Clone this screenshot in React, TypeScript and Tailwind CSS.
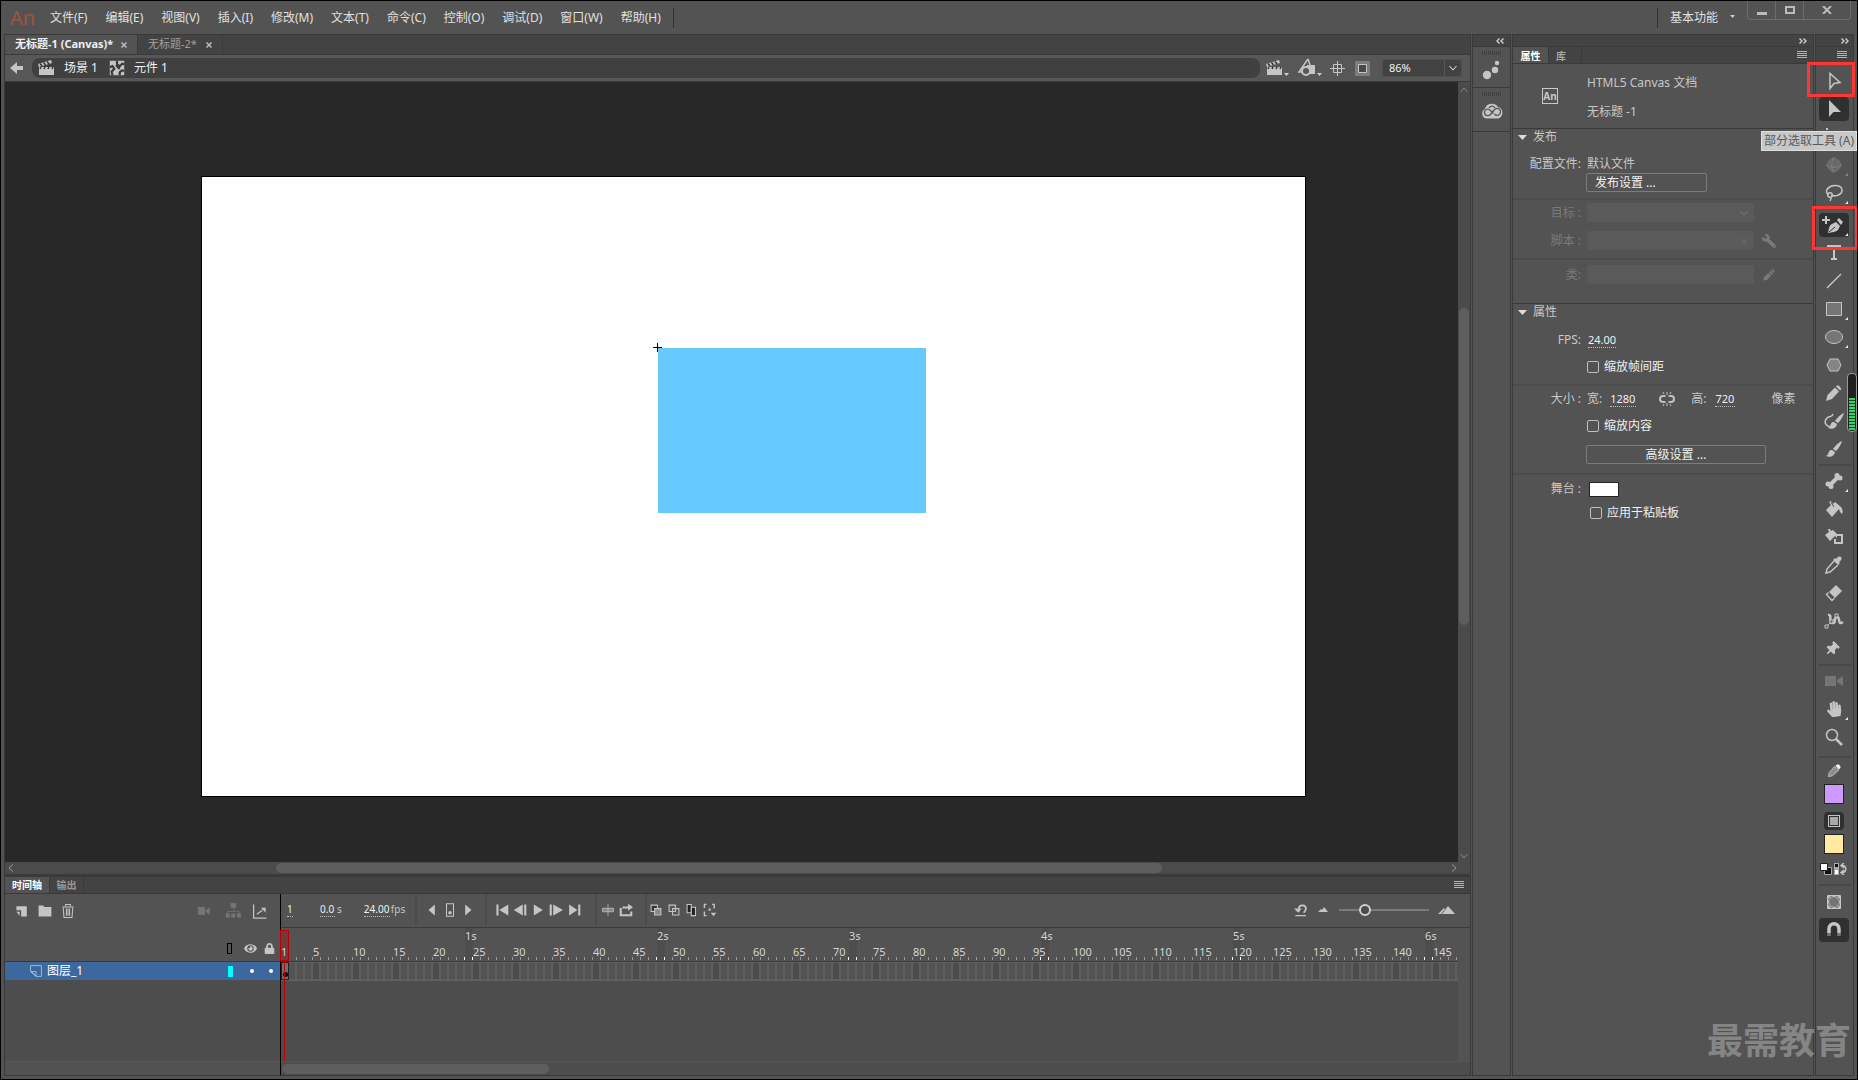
import type { ReactNode } from "react";
import { FaEye, FaHandPaper, FaLock, FaThumbtack, FaWrench } from "react-icons/fa";

const menus = [
  "文件(F)",
  "编辑(E)",
  "视图(V)",
  "插入(I)",
  "修改(M)",
  "文本(T)",
  "命令(C)",
  "控制(O)",
  "调试(D)",
  "窗口(W)",
  "帮助(H)",
];

const frames = Array.from({ length: 148 }, (_, i) => i + 1);

type IconProps = { children: ReactNode; size?: string };

function Icon({ children, size = "size-5" }: IconProps) {
  return (
    <svg
      viewBox="0 0 20 20"
      className={`${size} shrink-0 overflow-visible`}
      fill="currentColor"
      aria-hidden="true"
    >
      {children}
    </svg>
  );
}

function Chevron({ className = "" }: { className?: string }) {
  return (
    <svg
      viewBox="0 0 8 8"
      className={`size-2 shrink-0 ${className}`}
      fill="none"
      stroke="currentColor"
      aria-hidden="true"
    >
      <path d="M.5 2 4 6l3.500-4" />
    </svg>
  );
}

function Caret() {
  return (
    <svg viewBox="0 0 5 3" className="mb-0.5 h-[3px] w-[5px]" aria-hidden="true">
      <path d="M0 0h5L2.500 3z" fill="#ccc" />
    </svg>
  );
}

function MenuLines() {
  return (
    <button aria-label="面板菜单" className="text-[#b5b5b5]">
      <svg viewBox="0 0 10 8" className="h-2 w-2.5" stroke="currentColor" shapeRendering="crispEdges">
        <path d="M0 .5h10M0 2.500h10M0 4.500h10M0 6.500h10" />
      </svg>
    </button>
  );
}

function DoubleArrow({ left = false }: { left?: boolean }) {
  return (
    <svg
      viewBox="0 0 8 6"
      className={left ? "h-1.5 w-2 rotate-180" : "h-1.5 w-2"}
      fill="none"
      stroke="#c5c5c5"
      strokeWidth="1.500"
      aria-hidden="true"
    >
      <path d="m.5.5 2.500 2.500L.5 5.500M4.500.5 7 3 4.500 5.500" />
    </svg>
  );
}

function Clapper() {
  return (
    <Icon>
      <path d="M3 9h15v8H3z" />
      <path d="m2 6 13-4 1 3L3 9z" fill="#c5c5c5" />
      <path d="m4 5.500 2 2.500M7.500 4.500l2 2.500M11 3.500 13 6M5 9l-1 2M9 9l-1 2M13 9l-1 2M17 9l-1 2" stroke="#333" strokeWidth="1.500" />
    </Icon>
  );
}

type ToolProps = {
  name: string;
  children: ReactNode;
  active?: boolean;
  corner?: boolean;
  dim?: boolean;
  mark?: ReactNode;
};

function Tool({ name, children, active, corner, dim, mark }: ToolProps) {
  return (
    <div className="relative flex h-7 items-center justify-center pr-0.5">
      <button
        aria-label={name}
        disabled={dim}
        className={`relative flex h-6 w-[30px] items-center justify-center rounded-sm ${
          active ? "bg-[#303030]" : ""
        } ${dim ? "text-[#757575]" : "text-[#c5c5c5]"}`}
      >
        {children}
        {corner && (
          <svg viewBox="0 0 3 3" className="absolute right-px bottom-px size-[3px]">
            <path d="M3 0v3H0z" fill={dim ? "#888" : "#e8e8e8"} />
          </svg>
        )}
      </button>
      {mark}
    </div>
  );
}

function ToolDivider() {
  return <div className="mx-0.5 my-px h-0.5 bg-[#494949]" />;
}

function Brush() {
  return (
    <>
      <path d="M18 2c-3 1-7 5-9 8l3 2c2-2 5-6 6-10z" />
      <path d="M8 11c-3 0-3 2-4 4-.5 1-1 1.500-2 2 3 1.500 8 1 9-4z" />
    </>
  );
}

function ToolsPanel() {
  return (
    <aside className="relative flex w-[39px] flex-col border border-[#3a3a3a]">
      <div className="flex h-[11px] items-center justify-end bg-[#434343] pr-1">
        <DoubleArrow />
      </div>
      <div className="mb-[3px] flex h-[18px] items-center justify-end border-y border-[#3a3a3a] bg-[#434343] pr-1.5">
        <MenuLines />
      </div>

      <Tool
        name="选择工具"
        mark={<span className="absolute -top-[5px] -left-[9px] z-10 h-[35px] w-12 border-3 border-[#ff3535]" />}
      >
        <Icon>
          <path d="M6 2.500v15l4-5 6-1z" fill="none" stroke="currentColor" strokeWidth="1.500" />
        </Icon>
      </Tool>
      <Tool name="部分选取工具" active>
        <Icon>
          <path d="M5 1v17l4.500-5H17z" />
        </Icon>
      </Tool>
      <Tool name="任意变形工具" corner>
        <Icon>
          <path d="M2 1h2v2H2zM2 6h14v10H2z" />
        </Icon>
      </Tool>
      <Tool name="3D 旋转工具" corner dim>
        <Icon>
          <circle cx="10" cy="10" r="6.500" fill="#686868" stroke="currentColor" />
          <path d="M10 2c-3 4-3 12 0 16M2 10c4 3 12 3 16 0" fill="none" stroke="#808080" />
        </Icon>
      </Tool>
      <Tool name="套索工具" corner>
        <Icon>
          <g fill="none" stroke="currentColor" strokeWidth="1.500">
            <path d="M4.500 12C-1 7 6 2.500 11 2.500c9 0 9 8 2 10-2 .5-4 .5-6 0" />
            <circle cx="6" cy="12" r="2.300" />
            <path d="M6.500 14c2 2-1 2 0 4" />
          </g>
        </Icon>
      </Tool>
      <div className="h-1" />
      <Tool
        name="添加锚点工具"
        active
        corner
        mark={<span className="absolute -top-[5px] -left-1 z-10 h-11 w-[46px] border-3 border-[#ff3535]" />}
      >
        <Icon>
          <path d="M1 1h2v3h3v2H3v3H1V6h-3V4h3z" />
          <path d="M4 18c1-4 1-8 4-9l4-2 4 4-2 4c-2 2-6 2-10 3z" />
          <path d="m13 5 2-2 4 4-2 3z" />
          <path d="m5 17 6-5" stroke="#303030" />
        </Icon>
      </Tool>
      <Tool name="文本工具">
        <Icon>
          <path d="M3 2h14v2h-6v11h2v2H7v-2h2V4H3z" />
        </Icon>
      </Tool>
      <Tool name="线条工具">
        <Icon>
          <path d="M3 17 17 3" stroke="currentColor" strokeWidth="1.500" />
        </Icon>
      </Tool>
      <Tool name="矩形工具" corner>
        <Icon>
          <path d="M2.500 3.500h15v13h-15z" fill="#757575" stroke="currentColor" />
        </Icon>
      </Tool>
      <Tool name="椭圆工具" corner>
        <Icon>
          <ellipse cx="10" cy="10" rx="8.500" ry="6.500" fill="#757575" stroke="currentColor" />
        </Icon>
      </Tool>
      <Tool name="多角星形工具">
        <Icon>
          <path d="m6 4h8l3 6-3 6H6l-3-6z" fill="#858585" stroke="currentColor" />
        </Icon>
      </Tool>
      <Tool name="铅笔工具">
        <Icon>
          <path d="m2 18 1.500-6L11 4.500l4 4L8 16zM12 3.500l1-1c1-1 5 3 4 4l-1 1z" />
        </Icon>
      </Tool>
      <Tool name="画笔工具">
        <Icon>
          <g transform="translate(2 0)">
            <Brush />
          </g>
          <path d="M9 3c-1 4-3 1-6 4-4 4-1 8 3 9" fill="none" stroke="currentColor" strokeWidth="1.500" />
        </Icon>
      </Tool>
      <Tool name="刷子工具">
        <Icon>
          <Brush />
        </Icon>
      </Tool>
      <ToolDivider />
      <Tool name="骨骼工具" corner>
        <Icon>
          <path d="m6 14 8-8" stroke="currentColor" strokeWidth="4" />
          <circle cx="13" cy="4.500" r="2.500" />
          <circle cx="16" cy="7" r="2.500" />
          <circle cx="4" cy="13" r="2.500" />
          <circle cx="7" cy="15.500" r="2.500" />
        </Icon>
      </Tool>
      <Tool name="颜料桶工具">
        <Icon>
          <path d="m2 11 5-5-2-3 2-1 2 3 2-2 6 5c2 3 2 5 1 7l-2-2-1-3-7 8z" />
          <path d="m7 3 3 5" stroke="#535353" />
        </Icon>
      </Tool>
      <Tool name="墨水瓶工具">
        <Icon>
          <path d="m1 8 4-3-1-3h2l1 2 2-1 4 4v4l-2-2-5 5z" />
          <path d="M11.500 8H18v8h-7v-4" fill="none" stroke="currentColor" strokeWidth="2" />
        </Icon>
      </Tool>
      <Tool name="滴管工具">
        <Icon>
          <path d="M12 4c2-3 4-3 5-2s1 3-2 5l1 1-2 2-5-5 2-2z" />
          <path d="m10 6-7 8-1 4 4-1 8-7" fill="none" stroke="currentColor" strokeWidth="1.500" />
        </Icon>
      </Tool>
      <Tool name="橡皮擦工具">
        <Icon>
          <path d="m5 9 7-7 6 6-7 7z" />
          <path d="m4.500 9.500-2 2 5.500 6 2.500-2.500" fill="none" stroke="currentColor" strokeWidth="1.300" />
        </Icon>
      </Tool>
      <Tool name="宽度工具">
        <Icon>
          <g fill="none" stroke="currentColor">
            <path d="M4 4c5-1 0 7 4 8 5 1 1-6 5-6s0 9 6 5" strokeWidth="2.500" />
            <path d="M2 16 13 5" />
            <path d="M1 14h3v3H1zM11 3h3v3h-3zM6 9h3v3H6z" fill="#535353" />
          </g>
        </Icon>
      </Tool>
      <Tool name="图钉工具">
        <FaThumbtack className="mr-1 size-3.5 rotate-45" />
      </Tool>
      <ToolDivider />
      <Tool name="摄像头" dim>
        <Icon>
          <path d="M1 5h11v10H1zM13 9l6-4v10l-6-4z" />
        </Icon>
      </Tool>
      <Tool name="手形工具" corner>
        <FaHandPaper className="size-4 -rotate-6" />
      </Tool>
      <Tool name="缩放工具">
        <Icon>
          <circle cx="8" cy="8" r="5.500" fill="none" stroke="currentColor" strokeWidth="1.500" />
          <path d="m12 12 6 6" stroke="currentColor" strokeWidth="2.500" />
        </Icon>
      </Tool>
      <div className="pt-1 pb-[3px]">
        <ToolDivider />
      </div>

      <div className="flex flex-col items-center gap-1 pr-0.5 text-[#c5c5c5]">
        <Icon size="h-[18px] w-4">
          <path d="m3 17 1-5 7-8 5 5-8 7z" fill="#8d8d8d" stroke="#ccc" />
          <path d="m12 3 2-1c2-1 5 2 4 4l-2 2z" fill="#f5f5f5" />
        </Icon>
        <button aria-label="笔触颜色" className="size-5 border border-[#222] bg-[#cc99ff]" />
        <button aria-label="对象绘制" className="mt-1 flex h-[18px] w-5 items-center justify-center rounded-sm bg-[#303030]">
          <span className="size-3 border border-[#c5c5c5] bg-[#aaa] shadow-[inset_0_0_0_1px_#303030]" />
        </button>
        <button aria-label="填充颜色" className="size-5 border border-[#222] bg-[#ffe9a3]" />
      </div>
      <div className="flex h-[29px] items-center justify-center gap-0.5 pr-0.5">
        <button aria-label="黑白">
          <svg viewBox="0 0 12 12" className="size-3">
            <path d="M4.500 4.500h7v7h-7z" fill="#111" stroke="#aaa" />
            <path d="M.5.5h7v7h-7z" fill="#fff" stroke="#222" />
          </svg>
        </button>
        <button aria-label="交换颜色">
          <svg viewBox="0 0 13 12" className="h-3 w-[13px]">
            <path d="M0 0h5v12H0z" fill="#aaa" />
            <path d="M1 1h3v3H1z" fill="#111" />
            <path d="M1 7h3v4H1z" fill="#fff" />
            <path d="M8 2.500c5 0 5 7 0 7M10 0 7 2.500 10 5M10 7 7 9.500l3 2.500" fill="none" stroke="#c5c5c5" strokeWidth="1.500" />
          </svg>
        </button>
      </div>
      <ToolDivider />
      <div className="mt-px">
        <Tool name="平滑">
          <Icon>
            <path d="M3.500 3.500h13v13h-13z" fill="none" stroke="currentColor" />
            <circle cx="10" cy="10" r="5.500" fill="#757575" stroke="currentColor" />
            <path d="M4 4h3L4 7zM16 4h-3l3 3zM4 16h3l-3-3zM16 16h-3l3-3z" />
          </Icon>
        </Tool>
        <Tool name="贴紧至对象" active>
          <Icon>
            <path d="M5 13V9c0-7 10-7 10 0v4" fill="none" stroke="currentColor" strokeWidth="3.500" />
            <path d="M3.250 13h3.500v3h-3.500zM13.250 13h3.500v3h-3.500z" fill="#777" />
          </Icon>
        </Tool>
      </div>

      <div
        role="tooltip"
        className="absolute top-24 -right-1 z-10 h-5 border border-[#e0e0e0] bg-[#c8c8c8] px-0.5 text-xs leading-[18px] whitespace-nowrap text-[#5a5a5a]"
      >
        部分选取工具 (A)
      </div>
      <div className="absolute top-[338px] -right-1 flex h-[59px] w-2.5 flex-col justify-end rounded-sm border border-[#999] bg-[#202020] p-px">
        <div className="h-8 bg-[repeating-linear-gradient(#2fd565_0_1px,#2fd565_1px_2px,#174525_2px_3px)]" />
      </div>
    </aside>
  );
}

function Divider() {
  return <div className="h-0.5 bg-[#4b4b4b]" />;
}

function Row({ label, id, dim, children }: { label: string; id?: string; dim?: boolean; children: ReactNode }) {
  return (
    <div className={`grid h-[18px] grid-cols-[68px_1fr] items-center gap-x-1.5 ${dim ? "text-[#7a7a7a]" : ""}`}>
      {id ? (
        <label htmlFor={id} className="text-right">{label}</label>
      ) : (
        <span className="text-right">{label}</span>
      )}
      <div className="flex items-center">{children}</div>
    </div>
  );
}

function Check({ label, className = "pl-[74px]" }: { label: string; className?: string }) {
  return (
    <label className={`flex h-[18px] items-center gap-[5px] text-[#f0f0f0] ${className}`}>
      <input type="checkbox" className="size-3 appearance-none rounded-xs border border-[#c0c0c0]" />
      {label}
    </label>
  );
}

function SectionTitle({ children }: { children: ReactNode }) {
  return (
    <h2 className="flex h-4 items-center gap-1.5 pl-[5px]">
      <svg viewBox="0 0 9 5" className="h-[5px] w-[9px]" aria-hidden="true">
        <path d="M0 0h9L4.500 5z" fill="#ddd" />
      </svg>
      {children}
    </h2>
  );
}

const numberInput =
  "border-b border-dotted border-[#bbb] text-[#f0f0f0] outline-none leading-[14px] h-[15px]";

function DisabledSelect({ id }: { id: string }) {
  return (
    <div className="relative">
      <select id={id} disabled className="block h-[19px] w-[167px] appearance-none rounded-xs bg-[#5a5a5a]" />
      <Chevron className="absolute top-1.5 right-1.5 text-[#777]" />
    </div>
  );
}

function PropertiesPanel() {
  return (
    <aside className="w-[302px] border border-[#3a3a3a] text-xs leading-[18px] text-[#c8c8c8]">
      <div className="flex h-[11px] items-center justify-end bg-[#434343] pr-1.5">
        <DoubleArrow />
      </div>
      <div className="flex h-[18px] items-center border-y border-[#3a3a3a] bg-[#434343] pr-1.5 text-[10px] font-bold">
        <button className="h-4 w-9 border-r border-[#3a3a3a] bg-[#535353] text-white">属性</button>
        <button className="h-4 w-[33px] border-r border-[#3a3a3a] pr-2 text-[#a8a8a8]">库</button>
        <span className="flex-1" />
        <MenuLines />
      </div>
      <div className="flex h-[65px] border-b border-[#3a3a3a] pt-1 pl-[29px]">
        <span className="mt-5 h-4 w-4 border border-[#c8c8c8] text-center text-[10px] leading-[14px] font-bold">An</span>
        <div className="pl-[29px] leading-[29px]">
          <p>HTML5 Canvas 文档</p>
          <p>无标题 -1</p>
        </div>
      </div>

      <section className="border-b border-[#3a3a3a] pb-5">
        <SectionTitle>发布</SectionTitle>
        <div className="mt-2.5">
          <Row label="配置文件:">默认文件</Row>
          <div className="pl-[73px]">
            <button className="flex h-[19px] w-[121px] items-center rounded-xs border border-[#7c7c7c] pl-2 text-[#f0f0f0]">
              发布设置 ...
            </button>
          </div>
        </div>
        <div className="mt-1.5 mb-[3px]">
          <Divider />
        </div>
        <Row label="目标 :" id="target" dim>
          <DisabledSelect id="target" />
        </Row>
        <div className="mt-2.5 mb-[9px]">
          <Row label="脚本 :" id="script" dim>
            <DisabledSelect id="script" />
            <FaWrench className="ml-2 size-3.5 -scale-x-100" />
          </Row>
        </div>
        <Divider />
        <div className="mt-[5px]">
          <Row label="类:" id="class" dim>
            <input id="class" disabled className="h-[19px] w-[167px] rounded-xs bg-[#5a5a5a]" />
            <span className="ml-2">
              <Icon size="size-3.5">
                <path d="m2 18 1-5 6-6 4 4-6 6zM10 6l2-2 4 4-2 2zM13 3c2-3 7 1 4 4z" />
              </Icon>
            </span>
          </Row>
        </div>
      </section>

      <section>
        <SectionTitle>属性</SectionTitle>
        <div className="mt-[11px] mb-2 flex flex-col gap-[9px]">
          <Row label="FPS:" id="fps">
            <input id="fps" defaultValue="24.00" className={`ml-px w-7 text-[11px] ${numberInput}`} />
          </Row>
          <Check label="缩放帧间距" />
        </div>
        <Divider />
        <div className="mt-1 mb-[9px] flex flex-col gap-[9px]">
          <Row label="大小 :">
            <label htmlFor="width">宽:</label>
            <input id="width" defaultValue="1280" className={`ml-2 w-[26px] text-[11px] ${numberInput}`} />
            <button aria-label="链接宽高" className="ml-[23px]">
              <svg viewBox="0 0 16 14" className="h-3.5 w-4" fill="none" stroke="#c0c0c0">
                <path d="M6.500 4H4a3 3 0 0 0 0 6h2.500M9.500 4H12a3 3 0 0 1 0 6H9.500" strokeWidth="2" />
                <path d="M8 0v3M8 11v3M4 0l1 2M12 0l-1 2M4 14l1-2M12 14l-1-2" />
              </svg>
            </button>
            <label htmlFor="height" className="ml-4">高:</label>
            <input id="height" defaultValue="720" className={`ml-[9px] w-5 text-[11px] ${numberInput}`} />
            <span className="ml-9">像素</span>
          </Row>
          <Check label="缩放内容" />
          <button className="mt-px ml-[73px] h-[19px] w-[180px] rounded-xs border border-[#7c7c7c] leading-4 text-[#f0f0f0]">
            高级设置 ...
          </button>
        </div>
        <Divider />
        <div className="mt-[5px] flex flex-col gap-1.5">
          <Row label="舞台 :">
            <button aria-label="舞台颜色" className="ml-0.5 h-[15px] w-[30px] border border-[#222] bg-white" />
          </Row>
          <Check label="应用于粘贴板" className="pl-[77px]" />
        </div>
      </section>
    </aside>
  );
}

function DockStrip() {
  const grip = "mx-auto mt-1 h-1 w-5 bg-[repeating-linear-gradient(90deg,#3f3f3f_0_1px,transparent_1px_2px)]";
  return (
    <aside className="w-[39px] border border-[#3a3a3a] text-[#c5c5c5]">
      <div className="flex h-[11px] items-center justify-end bg-[#434343] pr-1.5">
        <DoubleArrow left />
      </div>
      <div className="h-[42px] border-y border-[#3a3a3a]">
        <div className={grip} />
        <button aria-label="组件" className="mx-auto mt-[5px] block">
          <Icon>
            <circle cx="5" cy="15" r="4.200" />
            <circle cx="13" cy="10" r="3.200" />
            <circle cx="15" cy="3" r="2.200" />
          </Icon>
        </button>
      </div>
      <div className="h-10 border-b border-[#3a3a3a]">
        <div className={grip} />
        <button aria-label="CC 库" className="mx-auto mt-[7px] block">
          <svg viewBox="0 0 22 16" className="h-4 w-[22px]">
            <path d="M6 15.500a5 5 0 0 1-2-9.500C5 0 14-1 17 4c6 1 6 11-1 11.500z" fill="#c5c5c5" />
            <path d="m12.500 10.500-3-3c-2-2.500-6-1.500-6 2s4 4 6 2l4-5c3-2.500 6-.5 6 2.500s-4 4.500-6 2M8 5c2-3 5-2 6 0" fill="none" stroke="#555" strokeWidth="1.300" />
          </svg>
        </button>
      </div>
    </aside>
  );
}

function EditBar() {
  return (
    <div className="flex h-[27px] items-center border-b border-[#3a3a3a] bg-[#575757] pr-2 pl-[5px] text-xs text-[#c5c5c5]">
      <button aria-label="返回">
        <svg viewBox="0 0 14 12" className="h-3 w-3.5" fill="currentColor">
          <path d="M0 6 7 0v4h6v4H7v4z" />
        </svg>
      </button>
      <nav className="ml-2 flex h-5 flex-1 items-center rounded-lg bg-[#404040] pl-1 text-[#f0f0f0]">
        <span className="text-[#c5c5c5]"><Clapper /></span>
        <a href="#scene" className="ml-2">场景 1</a>
        <span className="ml-2.5 text-[#c5c5c5]">
          <Icon size="size-[18px]">
            <path d="M2 2h16v16H2z" />
            <path d="M10 2v4l3 2 3-3 2 1M2 9l3-1 2 3-3 3 1 4M13 18v-3l2-2h3M9 7l4 4" fill="none" stroke="#3c3c3c" strokeWidth="2.500" />
          </Icon>
        </span>
        <a href="#symbol" className="ml-2">元件 1</a>
      </nav>
      <div className="ml-1 flex items-center gap-3">
        <button aria-label="编辑场景" className="flex items-end">
          <Clapper />
          <Caret />
        </button>
        <button aria-label="编辑元件" className="-ml-1 flex items-end">
          <Icon>
            <path d="M11 1 2 14h4M11 1l2 6" fill="none" stroke="currentColor" strokeWidth="1.500" />
            <path d="M10 7h8v9h-8z" />
            <circle cx="9" cy="13" r="4" fill="#575757" stroke="currentColor" strokeWidth="2" />
          </Icon>
          <Caret />
        </button>
        <button aria-label="舞台居中" className="-ml-1">
          <svg viewBox="0 0 15 15" className="size-[15px]" fill="none" stroke="currentColor">
            <path d="M7.500 0v15M0 7.500h15M3.500 3.500h8v8h-8z" />
          </svg>
        </button>
        <button aria-label="剪切舞台外内容" className="-ml-0.5">
          <svg viewBox="0 0 15 15" className="size-[15px]" fill="none" stroke="currentColor">
            <path d="M0 0h15v15H0z" fill="#7c7c7c" stroke="none" />
            <path d="M3.500 3.500h8v8h-8z" fill="#484848" />
          </svg>
        </button>
        <div className="flex h-[18px] w-20 rounded-xs border border-[#505050] bg-[#424242] text-[#f0f0f0]">
          <input aria-label="缩放比例" defaultValue="86%" className="w-[61px] pl-1.5 text-[11px] outline-none" />
          <button aria-label="选择缩放比例" className="flex flex-1 items-center justify-center border-l border-[#575757]">
            <Chevron />
          </button>
        </div>
      </div>
    </div>
  );
}

function Stage() {
  return (
    <div className="flex min-h-[720px] flex-1">
      <div className="relative flex-1 overflow-hidden bg-[#282828]">
        <div className="absolute top-[94px] left-[196px] h-[621px] w-[1105px] border border-black bg-white">
          <div className="absolute top-[171px] left-[456px] h-[165px] w-[268px] bg-[#66caff]" />
          <svg viewBox="0 0 9 9" className="absolute top-[166px] left-[451px] size-[9px]" stroke="#000">
            <path d="M4.500 0v9M0 4.500h9" />
          </svg>
        </div>
      </div>
      <div className="flex w-3 flex-col items-center bg-[#4b4b4b] text-[#888]">
        <Chevron className="mt-1 rotate-180" />
        <div className="mt-[214px] h-[317px] w-2.5 rounded-full bg-[#5e5e5e]" />
        <Chevron className="mt-auto mb-0.5" />
      </div>
    </div>
  );
}

function TimelineButton({ name, children }: { name: string; children: ReactNode }) {
  return (
    <button aria-label={name} className="flex w-[18px] items-center justify-center">
      <Icon size="size-3.5">{children}</Icon>
    </button>
  );
}

function TimelineToolbar() {
  const group = "flex h-full items-center border-l-2 border-[#4b4b4b]";
  return (
    <div className="flex h-[34px] items-center border-b border-[#3a3a3a] pb-0.5 text-[10px] text-[#c5c5c5]">
      <input aria-label="当前帧" defaultValue="1" className={`ml-1.5 w-1.5 ${numberInput}`} />
      <label className="ml-[27px] flex items-center gap-0.5">
        <input aria-label="运行时间" defaultValue="0.0" className={`w-[15px] ${numberInput}`} />s
      </label>
      <label className="ml-[22px] flex w-[51px] items-center gap-px">
        <input aria-label="帧频" defaultValue="24.00" className={`w-[26px] ${numberInput}`} />fps
      </label>
      <div className={`w-[70px] pl-1.5 ${group}`}>
        <TimelineButton name="后退一帧"><path d="M14 2v16L5 10z" /></TimelineButton>
        <TimelineButton name="插入关键帧">
          <path d="M5 1h10v18H5z" fill="none" stroke="currentColor" strokeWidth="1.500" />
          <circle cx="10" cy="14" r="2.500" />
        </TimelineButton>
        <TimelineButton name="前进一帧"><path d="M6 2v16l9-8z" /></TimelineButton>
      </div>
      <div className={`w-[110px] pl-1.5 ${group}`}>
        <TimelineButton name="转到第一帧"><path d="M2 2h3v16H2zM19 2v16L6 10z" /></TimelineButton>
        <TimelineButton name="上一帧"><path d="M14 2v16L1 10zM16 2h3v16h-3z" /></TimelineButton>
        <TimelineButton name="播放"><path d="M4 2v16l13-8z" /></TimelineButton>
        <TimelineButton name="下一帧"><path d="M1 2h3v16H1zM6 2v16l14-8z" /></TimelineButton>
        <TimelineButton name="转到最后一帧"><path d="M3 2v16l12-8zM16 2h3v16h-3z" /></TimelineButton>
      </div>
      <div className={`w-[50px] pl-0.5 ${group}`}>
        <TimelineButton name="帧居中">
          <path d="M2 7.500h16v5H2z" fill="#888" stroke="currentColor" />
          <path d="M10 1v18" stroke="currentColor" />
        </TimelineButton>
        <TimelineButton name="循环">
          <path d="M1 7h3v9h12v-4h3v7H1zM5 5h8V1l7 5-7 5V8H5z" />
        </TimelineButton>
      </div>
      <div className={`flex-1 ${group}`}>
        <TimelineButton name="绘图纸外观">
          <path d="M3 3h9v9H3z" fill="#333" stroke="currentColor" strokeWidth="1.500" />
          <path d="M8 8h9v9H8z" fill="#888" stroke="currentColor" strokeWidth="1.500" />
        </TimelineButton>
        <TimelineButton name="绘图纸外观轮廓">
          <path d="M3 3h9v9H3zM8 8h9v9H8z" fill="none" stroke="currentColor" strokeWidth="1.500" />
        </TimelineButton>
        <TimelineButton name="编辑多个帧">
          <path d="M3 2h6v12H3z" fill="#222" stroke="currentColor" strokeWidth="1.500" />
          <path d="M9 6h6v12H9z" fill="#222" stroke="currentColor" strokeWidth="1.500" />
        </TimelineButton>
        <TimelineButton name="修改标记">
          <path d="M5 2H2v5M2 12v6h3M13 2h3v6" fill="none" stroke="currentColor" strokeWidth="2" />
          <path d="M8 8h3v3H8zM11 14h8l-4 5z" />
        </TimelineButton>
      </div>
      <div className="mr-[15px] flex items-center">
        <TimelineButton name="重置缩放">
          <path d="M7 12V7c1-5 10-5 10 1 0 3-2 4-3 6" fill="none" stroke="currentColor" strokeWidth="2.500" />
          <path d="M0 8h11l-5 6zM2 17h15v2H2z" />
        </TimelineButton>
        <svg viewBox="0 0 10 5" className="ml-2 h-[5px] w-2.5" aria-hidden="true">
          <path d="m0 5 3-3 1 1 2-3 4 5z" fill="#c5c5c5" />
        </svg>
        <input
          type="range"
          aria-label="时间轴缩放"
          min="0"
          max="100"
          defaultValue="26"
          className="ml-[11px] h-3 w-[90px] appearance-none bg-[linear-gradient(#7b7b7b,#7b7b7b)] bg-[length:100%_2px] bg-center bg-no-repeat [&::-webkit-slider-thumb]:size-3 [&::-webkit-slider-thumb]:appearance-none [&::-webkit-slider-thumb]:rounded-full [&::-webkit-slider-thumb]:border-2 [&::-webkit-slider-thumb]:border-[#d0d0d0] [&::-webkit-slider-thumb]:bg-[#4b4b4b]"
        />
        <svg viewBox="0 0 17 8" className="ml-[9px] h-2 w-[17px]" aria-hidden="true">
          <path d="m0 8 6-6 1 1-4 5zM4 8l6-8 7 8z" fill="#c5c5c5" />
        </svg>
      </div>
    </div>
  );
}

function LayerList() {
  return (
    <div className="flex w-[276px] shrink-0 flex-col border-r border-black text-[#c5c5c5]">
      <div className="flex h-[34px] items-center pl-[9px]">
        <button aria-label="新建图层" className="w-[23px]">
          <Icon size="size-4">
            <path d="M3 4h13v13H9V9H3z" />
            <path d="M3 11h4v5z" />
          </Icon>
        </button>
        <button aria-label="新建文件夹" className="w-[23px]">
          <Icon size="size-4"><path d="M2 3h6l1 2h9v12H2z" /></Icon>
        </button>
        <button aria-label="删除">
          <Icon size="size-4">
            <path d="M3 5h14M7 4V2h6v2M4 6l1 12h10l1-12M8 7v9M10 7v9M12 7v9" fill="none" stroke="currentColor" strokeWidth="1.300" />
          </Icon>
        </button>
        <button aria-label="添加摄像头" disabled className="ml-auto w-7 text-[#757575]">
          <Icon size="size-4"><path d="M1 5h9v10H1zM11 9l5-4v10l-5-4z" /></Icon>
        </button>
        <button aria-label="图层父级" disabled className="w-[27px] text-[#757575]">
          <Icon size="size-4">
            <path d="M7 0h7v6H7zM1 13h5v5H1zM8 13h5v5H8zM15 13h5v5h-5zM10 6h1v4h7v3h-1v-2H4v2H3v-3h7z" />
          </Icon>
        </button>
        <button aria-label="图层深度" className="mr-3">
          <Icon size="size-4">
            <path d="M2 2v17h16" fill="none" stroke="currentColor" strokeWidth="1.500" />
            <path d="m6 14 7-5" stroke="currentColor" strokeWidth="1.500" />
            <path d="M11 6h6v6z" />
          </Icon>
        </button>
      </div>
      <div className="flex h-[34px] items-center justify-end border-b border-[#3a3a3a] pt-2 pr-[5px]">
        <button aria-label="轮廓" className="mr-3 h-[11px] w-[5px] border border-black" />
        <button aria-label="显示或隐藏" className="mr-[7px]"><FaEye className="size-[13px]" /></button>
        <button aria-label="锁定"><FaLock className="size-[11px]" /></button>
      </div>
      <div className="flex h-[18px] items-center bg-[#3c689e] pr-[7px] pl-[25px] text-xs text-white">
        <Icon size="size-3">
          <path d="M1 1h18v18h-8L1 10zM1 11h9v8z" fill="none" stroke="#a9c0de" strokeWidth="1.500" />
        </Icon>
        <span className="ml-[5px] flex-1">图层_1</span>
        <span className="h-[11px] w-[5px] bg-[#00ffff]" />
        <span className="ml-[17px] size-1 rounded-full bg-white" />
        <span className="ml-[15px] size-1 rounded-full bg-white" />
      </div>
      <div className="flex-1 bg-[#4d4d4d]" />
      <div className="h-3.5 border-t border-[#565656] bg-[#525252]" />
    </div>
  );
}

function Frames() {
  return (
    <div className="relative flex-1">
      <div className="mr-3 flex h-[34px] overflow-hidden border-b border-[#3a3a3a] text-[11px] text-[#d5d5d5]">
        {frames.map((n) => {
          const second = n % 24 === 0;
          const edge = second || n % 24 === 23;
          return (
            <div key={n} className={`relative h-full w-2 shrink-0 ${second ? "bg-[#4d4d4d]" : ""}`}>
              {second && <span className="absolute top-0 left-0 z-1 leading-4 whitespace-nowrap">{n / 24}s</span>}
              {(n === 1 || n % 5 === 0) && (
                <span className="absolute top-4 left-0 z-1 leading-4">{n}</span>
              )}
              <i
                className={`absolute right-0 bottom-px w-px ${
                  edge && n > 22 ? "h-[3px] bg-white" : n > 1 ? "h-[3px] bg-[#999]" : ""
                }`}
              />
            </div>
          );
        })}
      </div>
      <div className="mr-3 flex h-[19px] overflow-hidden border-t border-b-2 border-[#5f5f5f] bg-[#5f5f5f]">
        {frames.map((n) => (
          <div key={n} className={`mr-0.5 w-1.5 shrink-0 ${n % 5 === 0 ? "bg-[#4b4b4b]" : "bg-[#535353]"}`} />
        ))}
      </div>
      <div className="mr-3 h-20 bg-[#4d4d4d]" />
      <div className="flex h-3.5 items-center border-t border-[#565656] bg-[#4d4d4d] pl-px">
        <div className="h-2.5 w-[267px] rounded-full bg-[#5e5e5e]" />
      </div>

      {/* playhead sits over the ruler and the first frame */}
      <div className="absolute top-[34px] left-0 flex h-[18px] w-2 items-center justify-center border border-[#222] bg-[#707070] pt-1.5">
        <span className="size-[5px] shrink-0 rounded-full bg-black" />
      </div>
      <div className="absolute top-0.5 -left-px h-[31px] w-[9px] border border-[#c00000] bg-[#c00000]/30" />
      <div className="absolute top-[33px] left-[3px] h-[100px] w-px bg-[#c00000]" />
    </div>
  );
}

function Timeline() {
  return (
    <section className="shrink-0">
      <div className="flex h-3 items-center justify-between bg-[#4b4b4b] pr-3 pl-0.5 text-[#999]">
        <Chevron className="rotate-90" />
        <div className="mr-[288px] ml-[261px] h-2.5 flex-1 rounded-full bg-[#5e5e5e]" />
        <Chevron className="-rotate-90" />
      </div>
      <div className="h-[3px] bg-[#3a3a3a]" />
      <div className="flex h-[17px] items-center border-b border-[#3a3a3a] bg-[#434343] pr-1.5 text-[10px] font-bold">
        <button className="h-4 w-[45px] border-r border-[#3a3a3a] bg-[#535353] text-white">时间轴</button>
        <button className="h-4 w-[34px] border-r border-[#3a3a3a] text-[#999]">输出</button>
        <span className="flex-1" />
        <MenuLines />
      </div>
      <div className="flex">
        <LayerList />
        <div className="min-w-0 flex-1">
          <TimelineToolbar />
          <Frames />
        </div>
      </div>
    </section>
  );
}

function TitleBar() {
  return (
    <header className="flex h-[33px] shrink-0 items-center text-xs text-[#e0e0e0]">
      <span className="ml-[9px] w-10 text-xl leading-6 text-[#a5503f]">An</span>
      <nav className="flex gap-[18px]">
        {menus.map((menu) => (
          <button key={menu}>{menu}</button>
        ))}
      </nav>
      <span className="ml-3 h-5 border-l border-[#333]" />
      <span className="flex-1" />
      <span className="mr-3 h-5 border-l border-[#333]" />
      <button className="flex items-center gap-3">
        基本功能
        <Caret />
      </button>
      <div className="mr-1.5 ml-3 flex h-[19px] self-start rounded-b-sm border border-t-0 border-[#6c6c6c] text-[#bbb]">
        <button aria-label="最小化" className="flex w-7 items-center justify-center border-r border-[#6c6c6c]">
          <span className="mt-1.5 h-[3px] w-2.5 bg-current" />
        </button>
        <button aria-label="最大化" className="flex w-7 items-center justify-center border-r border-[#6c6c6c]">
          <span className="h-2 w-2.5 border-2 border-current" />
        </button>
        <button aria-label="关闭" className="flex w-[46px] items-center justify-center">
          <svg viewBox="0 0 10 8" className="h-2 w-2.5" stroke="currentColor" strokeWidth="2">
            <path d="m1 0 8 8M9 0 1 8" />
          </svg>
        </button>
      </div>
    </header>
  );
}

function CloseMark() {
  return (
    <svg viewBox="0 0 6 6" className="size-1.5" stroke="#bbb" strokeWidth="1.500" aria-hidden="true">
      <path d="m.5.5 5 5M5.500.5l-5 5" />
    </svg>
  );
}

export default function App() {
  return (
    <div className="relative flex min-h-screen flex-col overflow-hidden border border-black bg-[#535353] font-['Noto_Sans','Noto_Sans_CJK_SC',sans-serif]">
      <TitleBar />
      <div className="flex flex-1 gap-px px-[3px] pb-[3px]">
        <main className="flex min-w-0 flex-1 flex-col border border-[#3a3a3a]">
          <div className="flex h-5 shrink-0 border-b border-[#3a3a3a] bg-[#434343] text-[11px]">
            <button className="flex w-[133px] items-center justify-between border-r border-[#3a3a3a] bg-[#535353] px-2.5 font-bold whitespace-nowrap text-[#f0f0f0]">
              无标题-1 (Canvas)*
              <CloseMark />
            </button>
            <button className="flex w-[85px] items-center justify-between border-r border-[#3a3a3a] px-2.5 text-[#a0a0a0]">
              无标题-2*
              <CloseMark />
            </button>
          </div>
          <EditBar />
          <Stage />
          <Timeline />
        </main>
        <DockStrip />
        <PropertiesPanel />
        <ToolsPanel />
      </div>
      <div className="pointer-events-none absolute right-1.5 bottom-[18px] text-4xl font-bold text-[#858585]">
        最需教育
      </div>
    </div>
  );
}
